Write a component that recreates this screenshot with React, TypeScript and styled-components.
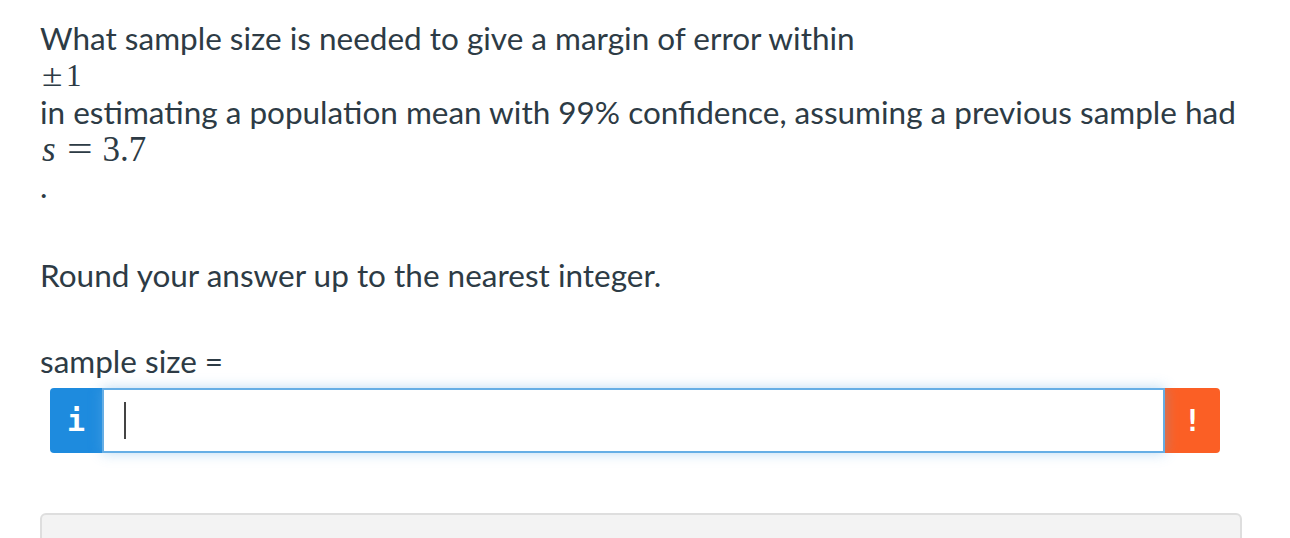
import styled, { createGlobalStyle } from "styled-components";

const GlobalStyle = createGlobalStyle`
    body {
        margin: 0;
        background: #fff;
        font-family: Lato, "Open Sans", sans-serif;
        color: #2d3b45;
    }
`;

const App = () => {
    return (
        <>
            <GlobalStyle />
            <Page>
                <Question>
                    <TextLine>What sample size is needed to give a margin of error within</TextLine>
                    <MathLine $size={31}>
                        <Op>±</Op>1
                    </MathLine>
                    <TextLine>in estimating a population mean with 99% confidence, assuming a previous sample had</TextLine>
                    <MathLine $size={35}>
                        <i>s</i>
                        <Rel>=</Rel>3.7
                    </MathLine>
                    <TextLine>.</TextLine>
                </Question>
                <Instruction>Round your answer up to the nearest integer.</Instruction>
                <Label>sample size =</Label>
                <InputGroup>
                    <AddonButton $tone="info">i</AddonButton>
                    <AnswerInput>
                        <Caret />
                    </AnswerInput>
                    <AddonButton $tone="warn">!</AddonButton>
                </InputGroup>
                <Panel />
            </Page>
        </>
    );
};

const Page = styled.main`
    padding: 20px 48px 0 40px;
    height: 538px;
    box-sizing: border-box;
    overflow: hidden;
`;
const Question = styled.div`
    font-size: 31.5px;
    line-height: 37px;
`;
const TextLine = styled.div``;
const MathLine = styled.div<{ $size: number }>`
    font-family: "Liberation Serif", "Times New Roman", serif;
    font-size: ${(p) => p.$size}px;
    line-height: 37px;
    padding-left: 2px;

    i {
        font-style: italic;
    }
`;
const Op = styled.span`
    display: inline-block;
    transform: scaleX(1.2);
    transform-origin: left center;
    margin-right: 7px;
`;
const Rel = styled.span`
    display: inline-block;
    transform: scaleX(1.3);
    margin: 0 13px 0 14px;
`;
const Instruction = styled.p`
    margin: 52px 0 0;
    font-size: 31.5px;
    line-height: 37px;
`;
const Label = styled.p`
    margin: 49px 0 0;
    font-size: 31.5px;
    line-height: 37px;
`;
const InputGroup = styled.div`
    display: flex;
    margin: 8px 0 0 10px;
    width: 1170px;
    height: 65px;
`;
const AddonButton = styled.div<{ $tone: "info" | "warn" }>`
    flex: 0 0 ${(p) => (p.$tone === "info" ? "52px" : "55px")};
    display: flex;
    align-items: center;
    justify-content: center;
    color: #fff;
    font-family: "DejaVu Sans Mono", monospace;
    font-weight: bold;
    font-size: 30px;
    background: ${(p) => (p.$tone === "info" ? "#1e8bde" : "#fb5f25")};
    border-radius: ${(p) => (p.$tone === "info" ? "4px 0 0 4px" : "0 4px 4px 0")};
`;
const AnswerInput = styled.div`
    flex: 1;
    display: flex;
    align-items: center;
    padding-left: 20px;
    border: 2px solid #66aee5;
    box-shadow: 0 0 12px rgba(102, 174, 229, 0.45);
    background: #fff;
    position: relative;
    z-index: 1;
`;
const Caret = styled.span`
    width: 2px;
    height: 37px;
    background: #444;
`;
const Panel = styled.div`
    margin-top: 60px;
    width: 1198px;
    height: 60px;
    background: #f3f3f3;
    border: 2px solid #dedede;
    border-radius: 6px;
`;

export default App;
